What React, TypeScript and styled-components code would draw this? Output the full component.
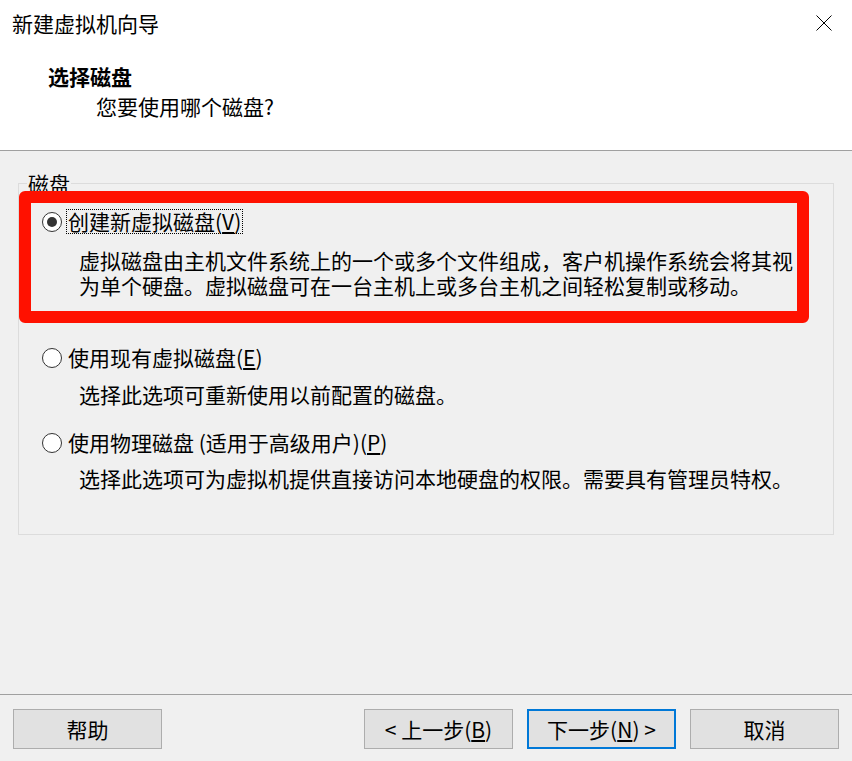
import React from "react";
import styled, { createGlobalStyle } from "styled-components";

const GlobalStyle = createGlobalStyle`
  html, body { margin: 0; padding: 0; }
  body {
    font-family: "Noto Sans CJK SC", "Microsoft YaHei", sans-serif;
    color: #000;
    background: #f0f0f0;
  }
  * { box-sizing: border-box; }
`;

const Window = styled.div`
  width: 852px;
  height: 761px;
  display: flex;
  flex-direction: column;
  background: #f0f0f0;
  overflow: hidden;
  font-size: 21px;
`;

const Header = styled.header`
  height: 151px;
  background: #fff;
  border-bottom: 1px solid #a0a0a0;
  display: flex;
  flex-direction: column;
`;

const TitleBar = styled.div`
  display: flex;
  align-items: center;
  justify-content: space-between;
  height: 30px;
  margin-top: 8px;
  padding: 0 20px 0 12px;
`;

const Title = styled.div`
  font-size: 21px;
  line-height: 30px;
`;

const CloseButton = styled.button`
  border: 0;
  background: transparent;
  padding: 0;
  width: 16px;
  height: 16px;
  display: flex;
  align-items: center;
  justify-content: center;
`;

const Heading = styled.div`
  margin: 23px 0 0 48px;
  font-size: 21px;
  font-weight: 700;
  line-height: 30px;
`;

const SubHeading = styled.div`
  margin-left: 96px;
  font-size: 21px;
  line-height: 30px;
`;

const Body = styled.main`
  flex: 1;
  padding: 20px 18px 0 18px;
`;

const GroupBox = styled.fieldset`
  margin: 0;
  min-width: 0;
  padding: 0 0 43px 0;
  border: 1px solid #dcdcdc;
`;

const Legend = styled.legend`
  margin-left: 8px;
  padding: 0 1px;
  font-size: 21px;
  line-height: 25px;
`;

const Option = styled.div<{ $top: number }>`
  position: relative;
  margin-top: ${(p) => p.$top}px;
  padding-left: 23px;
`;

const OptionRow = styled.label`
  display: flex;
  align-items: center;
  height: 25px;
  gap: 4px;
`;

const Radio = styled.span<{ $checked?: boolean }>`
  width: 20px;
  height: 20px;
  border-radius: 50%;
  border: ${(p) => (p.$checked ? "1.6px solid #333" : "1px solid #333")};
  background: #fff;
  display: flex;
  align-items: center;
  justify-content: center;
  flex: none;
  &::after {
    content: "";
    display: ${(p) => (p.$checked ? "block" : "none")};
    width: 10px;
    height: 10px;
    border-radius: 50%;
    background: #333;
  }
`;

const OptionLabel = styled.span<{ $focused?: boolean }>`
  line-height: 23px;
  padding: 0 1px;
  border: 1px dotted ${(p) => (p.$focused ? "#000" : "transparent")};
  white-space: nowrap;
`;

const Description = styled.div<{ $gap: number }>`
  margin-top: ${(p) => p.$gap}px;
  padding-left: 37px;
  width: 754px;
  line-height: 25px;
  font-size: 21px;
`;

const Highlight = styled.div`
  position: absolute;
  top: -18px;
  left: 0;
  right: 24px;
  bottom: -25px;
  border: 12px solid #ff1100;
  border-radius: 6px;
  pointer-events: none;
`;

const Footer = styled.footer`
  height: 67px;
  border-top: 1px solid #a0a0a0;
  display: flex;
  justify-content: space-between;
  align-items: flex-start;
  padding: 14px 13px 0 13px;
`;

const ButtonGroup = styled.div`
  display: flex;
  gap: 14px;
`;

const Button = styled.button<{ $default?: boolean }>`
  width: 149px;
  height: 40px;
  background: #e1e1e1;
  border: ${(p) => (p.$default ? "2px solid #0078d7" : "1px solid #adadad")};
  font-family: "Noto Sans CJK SC", "Microsoft YaHei", sans-serif;
  font-size: 21px;
  color: #000;
  padding: 0;
  display: flex;
  align-items: center;
  justify-content: center;
  line-height: 1;
`;

const CloseIcon = () => (
  <svg width="16" height="16" viewBox="0 0 16 16">
    <path d="M0.5 0.5 L15.5 15.5 M15.5 0.5 L0.5 15.5" stroke="#000" strokeWidth="1" fill="none" />
  </svg>
);

export default function App() {
  return (
    <>
      <GlobalStyle />
      <Window>
        <Header>
          <TitleBar>
            <Title>新建虚拟机向导</Title>
            <CloseButton aria-label="关闭">
              <CloseIcon />
            </CloseButton>
          </TitleBar>
          <Heading>选择磁盘</Heading>
          <SubHeading>您要使用哪个磁盘?</SubHeading>
        </Header>
        <Body>
          <GroupBox>
            <Legend>磁盘</Legend>
            <Option $top={13}>
              <OptionRow>
                <Radio $checked />
                <OptionLabel $focused>
                  创建新虚拟磁盘(<u>V</u>)
                </OptionLabel>
              </OptionRow>
              <Description $gap={14}>
                虚拟磁盘由主机文件系统上的一个或多个文件组成，客户机操作系统会将其视为单个硬盘。虚拟磁盘可在一台主机上或多台主机之间轻松复制或移动。
              </Description>
              <Highlight />
            </Option>
            <Option $top={47}>
              <OptionRow>
                <Radio />
                <OptionLabel>
                  使用现有虚拟磁盘(<u>E</u>)
                </OptionLabel>
              </OptionRow>
              <Description $gap={12}>选择此选项可重新使用以前配置的磁盘。</Description>
            </Option>
            <Option $top={23}>
              <OptionRow>
                <Radio />
                <OptionLabel>
                  使用物理磁盘 (适用于高级用户)(<u>P</u>)
                </OptionLabel>
              </OptionRow>
              <Description $gap={11}>
                选择此选项可为虚拟机提供直接访问本地硬盘的权限。需要具有管理员特权。
              </Description>
            </Option>
          </GroupBox>
        </Body>
        <Footer>
          <Button>帮助</Button>
          <ButtonGroup>
            <Button>
              &lt; 上一步(<u>B</u>)
            </Button>
            <Button $default>
              下一步(<u>N</u>) &gt;
            </Button>
            <Button>取消</Button>
          </ButtonGroup>
        </Footer>
      </Window>
    </>
  );
}
